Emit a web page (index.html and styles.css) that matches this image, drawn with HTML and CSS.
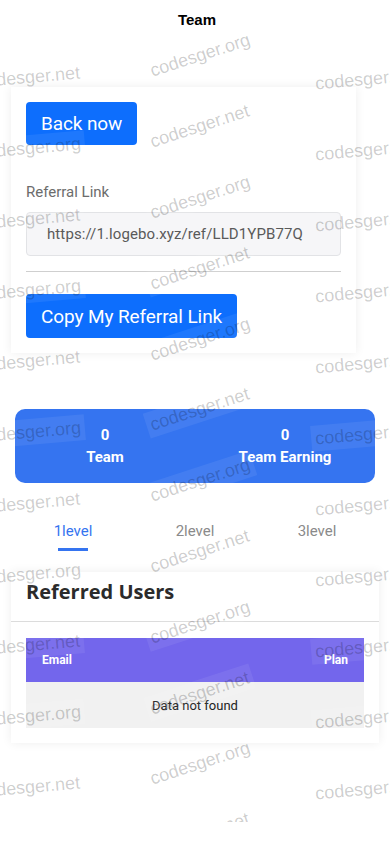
FILE: index.html
```html
<!DOCTYPE html>
<html lang="en">
<head>
<meta charset="utf-8">
<meta name="viewport" content="width=device-width, initial-scale=1">
<title>Team</title>
<link rel="stylesheet" href="styles.css">
</head>
<body>
<header class="topbar">Team</header>

<section class="card card-ref">
  <button class="btn">Back now</button>
  <label class="ref-label">Referral Link</label>
  <div class="ref-input">https://1.logebo.xyz/ref/LLD1YPB77Q</div>
  <hr class="ref-hr">
  <button class="btn">Copy My Referral Link</button>
</section>

<section class="stats">
  <div class="stat"><div class="stat-num">0</div><div class="stat-label">Team</div></div>
  <div class="stat"><div class="stat-num">0</div><div class="stat-label">Team Earning</div></div>
</section>

<nav class="tabs">
  <div class="tab active"><span>1level</span><i class="tab-bar"></i></div>
  <div class="tab"><span>2level</span><i class="tab-bar"></i></div>
  <div class="tab"><span>3level</span><i class="tab-bar"></i></div>
</nav>

<section class="card card-users">
  <h2 class="users-title">Referred Users</h2>
  <div class="users-body">
    <div class="tbl">
      <div class="tbl-head"><span>Email</span><span>Plan</span></div>
      <div class="tbl-empty">Data not found</div>
    </div>
  </div>
</section>

<div class="wm-layer" aria-hidden="true">
  <div class="wm-col wm-left">
    <div class="wm"><span>codesger.net</span></div>
    <div class="wm"><span>codesger.org</span></div>
    <div class="wm"><span>codesger.net</span></div>
    <div class="wm"><span>codesger.org</span></div>
    <div class="wm"><span>codesger.net</span></div>
    <div class="wm"><span>codesger.org</span></div>
    <div class="wm"><span>codesger.net</span></div>
    <div class="wm"><span>codesger.org</span></div>
    <div class="wm"><span>codesger.net</span></div>
    <div class="wm"><span>codesger.org</span></div>
    <div class="wm"><span>codesger.net</span></div>
  </div>
  <div class="wm-col wm-mid">
    <div class="wm"><span>codesger.org</span></div>
    <div class="wm"><span>codesger.net</span></div>
    <div class="wm"><span>codesger.org</span></div>
    <div class="wm"><span>codesger.net</span></div>
    <div class="wm"><span>codesger.org</span></div>
    <div class="wm"><span>codesger.net</span></div>
    <div class="wm"><span>codesger.org</span></div>
    <div class="wm"><span>codesger.net</span></div>
    <div class="wm"><span>codesger.org</span></div>
    <div class="wm"><span>codesger.net</span></div>
    <div class="wm"><span>codesger.org</span></div>
    <div class="wm"><span>codesger.net</span></div>
  </div>
  <div class="wm-col wm-right">
    <div class="wm"><span>codesger.net</span></div>
    <div class="wm"><span>codesger.org</span></div>
    <div class="wm"><span>codesger.net</span></div>
    <div class="wm"><span>codesger.org</span></div>
    <div class="wm"><span>codesger.net</span></div>
    <div class="wm"><span>codesger.org</span></div>
    <div class="wm"><span>codesger.net</span></div>
    <div class="wm"><span>codesger.org</span></div>
    <div class="wm"><span>codesger.net</span></div>
    <div class="wm"><span>codesger.org</span></div>
    <div class="wm"><span>codesger.net</span></div>
  </div>
</div>
</body>
</html>
```
FILE: styles.css
```css
* { box-sizing: border-box; }
html, body { margin: 0; padding: 0; background: #fff; }
body {
  font-family: Roboto, "Liberation Sans", Arial, sans-serif;
  color: #212529;
  width: 390px;
  min-height: 844px;
  position: relative;
  overflow: hidden;
}

.topbar {
  height: 39px;
  display: flex;
  align-items: center;
  justify-content: center;
  font-family: "Liberation Sans", Arial, sans-serif;
  font-weight: 700;
  font-size: 15px;
  color: #000;
  padding-left: 4px;
}

.card {
  background: #fff;
  box-shadow: 0 0 10px rgba(0, 0, 0, 0.07);
}

.card-ref {
  margin: 48px 34px 0 11px;
  padding: 15px 15px 15px;
  display: flex;
  flex-direction: column;
  align-items: flex-start;
}

.btn {
  height: 43px;
  padding: 0 15px;
  border: none;
  border-radius: 4px;
  background: #0d6efd;
  color: #fff;
  font-family: Roboto, "Liberation Sans", sans-serif;
  font-size: 19px;
  line-height: 1;
  letter-spacing: -0.1px;
}
.card-ref .btn:last-child { height: 44px; }

.ref-label {
  margin-top: 38px;
  font-size: 15px;
  line-height: 18px;
  color: #6c6c6c;
}

.ref-input {
  margin-top: 11px;
  width: 100%;
  height: 44px;
  display: flex;
  align-items: center;
  padding-left: 20px;
  background: #f6f6f8;
  border: 1px solid #e2e3e6;
  border-radius: 4px;
  font-size: 15px;
  color: #5a5a5a;
  letter-spacing: 0.1px;
}

.ref-hr {
  width: 100%;
  margin: 15px 0 22px;
  border: 0;
  border-top: 1px solid #cfcfcf;
}

.stats {
  margin: 56px 15px 0;
  height: 74px;
  background: #3574f0;
  border-radius: 10px;
  display: grid;
  grid-template-columns: 1fr 1fr;
  align-items: center;
  color: #fff;
}
.stat {
  text-align: center;
  font-weight: 700;
  font-size: 15px;
  line-height: 22px;
}

.tabs {
  margin: 27px 12px 0;
  display: grid;
  grid-template-columns: repeat(3, 1fr);
}
.tab {
  display: flex;
  flex-direction: column;
  align-items: center;
  padding-top: 10px;
  font-size: 15px;
  line-height: 22px;
  color: #8a8a8a;
}
.tab-bar {
  display: block;
  width: 30px;
  height: 3px;
  margin-top: 6px;
  background: transparent;
}
.tab.active { color: #3574f0; }
.tab.active .tab-bar { background: #3574f0; }

.card-users {
  margin: 21px 11px 0;
  padding-bottom: 15px;
}
.users-title {
  margin: 0;
  height: 50px;
  padding: 5px 15px 0;
  font-family: "Open Sans", Poppins, sans-serif;
  font-weight: 700;
  font-size: 20px;
  line-height: 30px;
  color: #2b2b2b;
  border-bottom: 1px solid #dcdcdc;
}
.users-body { padding: 16px 15px 0; }
.tbl-head {
  height: 44px;
  background: #7366ec;
  display: flex;
  justify-content: space-between;
  align-items: center;
  padding: 0 16px;
  color: #fff;
  font-weight: 700;
  font-size: 12px;
}
.tbl-empty {
  height: 46px;
  background: #f1f1f1;
  display: flex;
  align-items: center;
  justify-content: center;
  font-size: 13px;
  color: #222;
}

/* watermark overlay */
.wm-layer {
  position: absolute;
  top: 0;
  left: 0;
  width: 390px;
  height: 822px;
  overflow: hidden;
  pointer-events: none;
  z-index: 10;
}
.wm-col {
  position: absolute;
  width: 180px;
  display: flex;
  flex-direction: column;
}
.wm {
  flex: 0 0 71.1px;
  height: 71.1px;
  display: flex;
  align-items: center;
  justify-content: center;
}
.wm span {
  font-family: "Liberation Sans", Arial, sans-serif;
  font-size: 18px;
  line-height: 22px;
  padding: 2px 4px;
  color: rgba(0, 0, 0, 0.2);
  background: rgba(255, 255, 255, 0.07);
  white-space: nowrap;
}
.wm-left { left: -61px; top: 41px; }
.wm-left span { transform: rotate(-5deg); }
.wm-mid { left: 110px; top: 20px; }
.wm-mid .wm { flex-basis: 70.8px; height: 70.8px; }
.wm-mid span { transform: rotate(-18deg); }
.wm-right { left: 277px; top: 43px; }
.wm-right span { transform: rotate(-5deg); }
```
